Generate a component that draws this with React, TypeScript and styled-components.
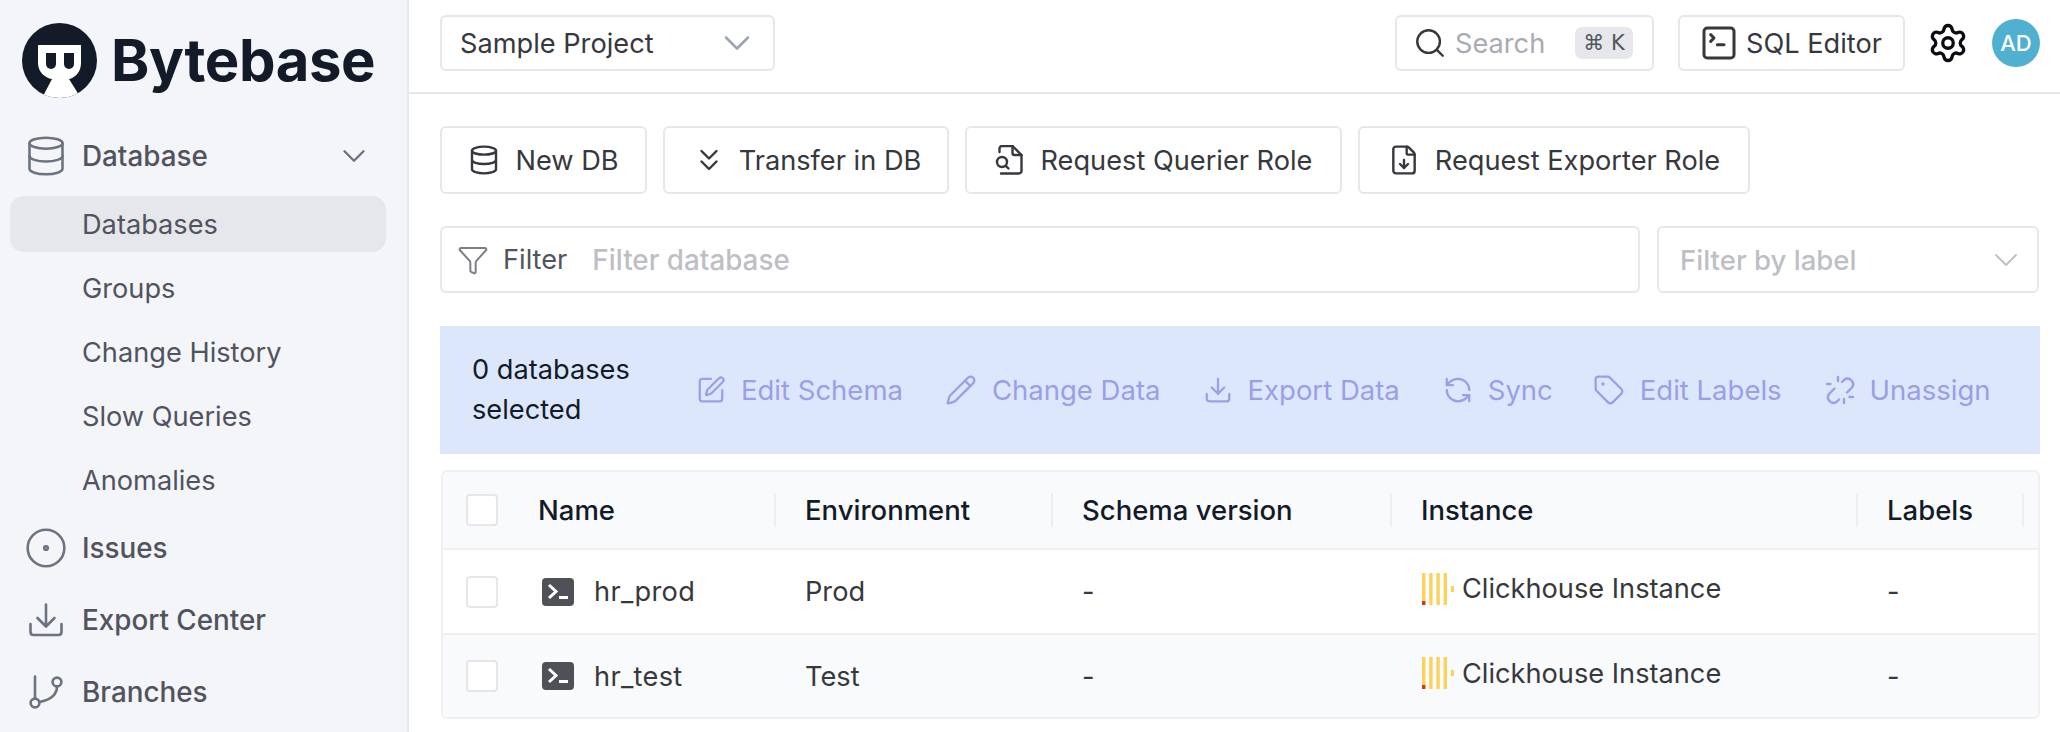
import React from "react";
import styled, { createGlobalStyle } from "styled-components";
import {
  ChevronDown,
  ChevronsDown,
  Search as SearchIcon,
  SquareTerminal,
  Settings,
  FileDown,
  Filter,
  SquarePen,
  Pencil,
  Download,
  RefreshCcw,
  Tag,
  CircleDot,
  Database as DbIcon,
} from "lucide-react";

const Global = createGlobalStyle`
  html, body { margin: 0; padding: 0; background: #fff; }
  body { font-family: Inter, "Liberation Sans", sans-serif; width: 2060px; height: 732px; overflow: hidden; }
  * { box-sizing: border-box; }
`;

const Page = styled.div`
  display: flex;
  width: 2060px;
  height: 732px;
  overflow: hidden;
`;

const Sidebar = styled.aside`
  width: 409px;
  flex: none;
  background: #f3f5f9;
  border-right: 2px solid #e5e7eb;
  display: flex;
  flex-direction: column;
`;

const LogoRow = styled.div`
  display: flex;
  align-items: center;
  gap: 14px;
  height: 120px;
  padding-left: 22px;
`;

const Wordmark = styled.span`
  font-family: Inter, sans-serif;
  font-weight: 700;
  font-size: 58px;
  letter-spacing: -0.4px;
  line-height: 1;
  color: #131a28;
`;

const NavTop = styled.div`
  display: flex;
  align-items: center;
  flex: none;
  height: 72px;
  padding: 0 34px 0 28px;
  gap: 18px;
  color: #51535e;
  font-size: 27.8px;
  font-weight: 500;
  svg { flex: none; color: #6b7280; }
`;

const NavIcon = styled.span`
  width: 36px;
  height: 36px;
  flex: none;
  display: flex;
  align-items: center;
  justify-content: center;
`;

const NavTopLabel = styled.span`
  flex: 1;
`;

const SubList = styled.div`
  flex: none;
  margin: 4px 0 -4px;
`;

const SubItem = styled.div<{ $active?: boolean }>`
  display: flex;
  align-items: center;
  height: 56px;
  margin: 0 21px 8px 10px;
  padding-left: 72px;
  border-radius: 14px;
  font-size: 27.2px;
  color: #51535e;
  background: ${(p) => (p.$active ? "#e5e7eb" : "transparent")};
`;

const Main = styled.main`
  flex: 1;
  min-width: 0;
  display: flex;
  flex-direction: column;
`;

const TopBar = styled.header`
  height: 94px;
  flex: none;
  border-bottom: 2px solid #e5e7eb;
  display: flex;
  align-items: center;
  padding: 0 20px 6px 31px;
`;

const Outline = styled.div`
  display: flex;
  align-items: center;
  border: 2px solid #e5e7eb;
  border-radius: 6px;
  background: #fff;
  font-size: 27.2px;
  color: #36383d;
`;

const ProjectSelect = styled(Outline)`
  width: 335px;
  height: 56px;
  padding: 0 14px 0 18px;
  justify-content: space-between;
  svg { color: #9ca3af; }
`;

const Spacer = styled.div`
  flex: 1;
`;

const SearchBox = styled(Outline)`
  width: 259px;
  height: 56px;
  padding: 0 19px 0 16px;
  gap: 8px;
  color: #a8abb1;
  svg { color: #36383d; flex: none; }
`;

const Kbd = styled.span`
  margin-left: auto;
  height: 32px;
  width: 58px;
  border-radius: 7px;
  background: #e5e7eb;
  color: #52555b;
  display: flex;
  align-items: center;
  justify-content: center;
  gap: 8px;
  font-size: 21px;
  font-family: "DejaVu Sans", Inter, sans-serif;
`;

const SqlButton = styled(Outline)`
  width: 227px;
  height: 56px;
  margin-left: 24px;
  padding-left: 19px;
  gap: 7px;
  svg { flex: none; }
`;

const GearWrap = styled.div`
  margin-left: 22px;
  display: flex;
  color: #0b0d12;
`;

const Avatar = styled.div`
  margin-left: 23px;
  width: 48px;
  height: 48px;
  border-radius: 50%;
  background: #4fb0cf;
  color: #fff;
  font-size: 22px;
  font-weight: 500;
  display: flex;
  align-items: center;
  justify-content: center;
`;

const Content = styled.section`
  padding: 32px 20px 0 31px;
  display: flex;
  flex-direction: column;
`;

const ActionRow = styled.div`
  display: flex;
  gap: 16px;
`;

const ActionButton = styled(Outline)<{ $w: number; $gap: number }>`
  width: ${(p) => p.$w}px;
  height: 68px;
  justify-content: center;
  gap: ${(p) => p.$gap}px;
  color: #36383d;
  svg { flex: none; }
`;

const FilterRow = styled.div`
  display: flex;
  gap: 17px;
  margin-top: 32px;
`;

const FilterInput = styled(Outline)`
  width: 1200px;
  height: 67px;
  padding-left: 15px;
  color: #52555b;
  svg { color: #7c7f87; }
`;

const FilterLabel = styled.span`
  margin-left: 14px;
`;

const Placeholder = styled.span`
  margin-left: 25px;
  color: #bdbfc4;
  font-size: 27.8px;
  font-weight: 500;
`;

const LabelSelect = styled(Outline)`
  width: 382px;
  height: 67px;
  padding: 0 11px 0 21px;
  justify-content: space-between;
  color: #bdbfc4;
  font-size: 27.6px;
  font-weight: 500;
  svg { color: #bdbfc4; }
`;

const Banner = styled.div`
  margin-top: 33px;
  height: 128px;
  background: #dde7fb;
  display: flex;
  align-items: center;
  padding-left: 32px;
`;

const BannerCount = styled.div`
  width: 224px;
  flex: none;
  font-size: 27.2px;
  line-height: 40px;
  color: #131a28;
`;

const BannerAction = styled.div<{ $ml: number }>`
  display: flex;
  align-items: center;
  gap: 15px;
  margin-left: ${(p) => p.$ml}px;
  font-size: 27.5px;
  color: #9a9fe6;
  white-space: nowrap;
  svg { flex: none; }
`;

const Table = styled.div`
  margin-top: 16px;
  border: 2px solid #eff0f3;
  border-radius: 6px;
  margin-left: 1px;
  width: 1599px;
  overflow: hidden;
`;

const Row = styled.div<{ $bg: string; $h: number; $line?: boolean }>`
  display: grid;
  grid-template-columns: 66px 267px 277px 339px 466px 166px 1fr;
  height: ${(p) => p.$h}px;
  background: ${(p) => p.$bg};
  align-items: center;
  border-bottom: ${(p) => (p.$line ? "2px solid #eff0f3" : "none")};
`;

const CheckCell = styled.div`
  padding-left: 23px;
  display: flex;
`;

const Checkbox = styled.span`
  width: 32px;
  height: 32px;
  background: #fff;
  border: 2px solid #e5e7eb;
  border-radius: 4px;
`;

const HeadCell = styled.div`
  position: relative;
  padding-left: 29px;
  font-size: 27.5px;
  font-weight: 500;
  color: #131a28;
  white-space: nowrap;
  &::after {
    content: "";
    position: absolute;
    right: 0;
    top: 0;
    bottom: 0;
    width: 2px;
    background: #eceef1;
  }
`;

const Cell = styled.div`
  padding-left: 29px;
  font-size: 27.2px;
  color: #36383d;
  display: flex;
  align-items: center;
  white-space: nowrap;
`;

const NameCell = styled(Cell)`
  padding-left: 33px;
  gap: 20px;
  letter-spacing: 0.3px;
`;

const InstanceCell = styled(Cell)`
  padding-left: 30px;
  gap: 8px;
  margin-top: -6px;
`;

const LogoMark = () => (
  <svg width="75" height="75" viewBox="0 0 75 75">
    <defs>
      <clipPath id="logoClip">
        <circle cx="37.5" cy="37.5" r="37.5" />
      </clipPath>
    </defs>
    <circle cx="37.5" cy="37.5" r="37.5" fill="#131a28" />
    <g clipPath="url(#logoClip)">
      <path
        d="M16 22H59V40C59 49 53 55 47 56L57 72V75H20L30 56C23 55 16 49 16 40Z"
        fill="#fff"
      />
    </g>
    <path d="M42 30H52V41A5 5 0 0 1 42 41Z" fill="#131a28" />
    <path d="M24 30H34V41A5 5 0 0 1 24 41Z" fill="#131a28" />
  </svg>
);

const BranchIcon = () => (
  <svg width="34" height="34" viewBox="0 0 34 34" fill="none" stroke="currentColor" strokeWidth="2.6" strokeLinecap="round">
    <circle cx="6" cy="28" r="4.4" />
    <circle cx="28" cy="7" r="4.4" />
    <path d="M6 23.6V1.5" />
    <path d="M28 11.4C28 20 20 25 10.4 27" />
  </svg>
);

const DownloadTray = () => (
  <svg width="34" height="34" viewBox="0 0 34 34" fill="none" stroke="currentColor" strokeWidth="2.6" strokeLinecap="round" strokeLinejoin="round">
    <path d="M1.5 21V29C1.5 31 2.5 32 4.5 32H29.5C31.5 32 32.5 31 32.5 29V21" />
    <path d="M17 1.5V23M8.5 15L17 23.5L25.5 15" />
  </svg>
);

const QuerierIcon = () => (
  <svg width="28" height="30" viewBox="0 0 28 30" fill="none" stroke="currentColor" strokeWidth="2.4" strokeLinecap="round" strokeLinejoin="round">
    <path d="M4.5 7V3.5A2.5 2.5 0 0 1 7 1H17.5L26.5 10V26A2.5 2.5 0 0 1 24 28.5H6" />
    <path d="M17.5 1V8A2 2 0 0 0 19.5 10H26.5" />
    <circle cx="7" cy="17" r="5" />
    <path d="M10.8 20.8L13.5 23.5" />
  </svg>
);

const UnassignIcon = () => (
  <svg width="30" height="30" viewBox="0 0 30 30" fill="none" stroke="currentColor" strokeWidth="2.4" strokeLinecap="round" strokeLinejoin="round">
    <path d="M17 7L19.5 4.5A5.6 5.6 0 0 1 27 12.5L22 17.5" />
    <path d="M9.5 13.5L4 19A5.6 5.6 0 0 0 11.5 27L14 24.5" />
    <path d="M13 2V6M19 24V28M2 9H5.5M24.5 22H28" />
  </svg>
);

const ClickhouseIcon = () => (
  <svg width="32" height="32" viewBox="0 0 32 32">
    <rect x="0" y="0" width="3.4" height="32" fill="#fbd35c" />
    <rect x="7.2" y="0" width="3.4" height="32" fill="#fbd35c" />
    <rect x="14.4" y="0" width="3.4" height="32" fill="#fbd35c" />
    <rect x="21.6" y="0" width="3.4" height="32" fill="#fbd35c" />
    <rect x="28.8" y="13" width="3.2" height="6" fill="#fbd35c" />
    <rect x="0" y="28" width="3.4" height="4" fill="#d8352a" />
  </svg>
);

const TerminalBadge = () => (
  <svg width="32" height="28" viewBox="0 0 32 28">
    <rect width="32" height="28" rx="4" fill="#4f5158" />
    <path d="M7 7L14 13.5L7 20" fill="none" stroke="#fff" strokeWidth="3" />
    <rect x="17" y="18" width="9" height="3" fill="#fff" />
  </svg>
);

const subItems = ["Groups", "Change History", "Slow Queries", "Anomalies"];

const rows = [
  { name: "hr_prod", env: "Prod", bg: "#ffffff", h: 85, line: true },
  { name: "hr_test", env: "Test", bg: "#f9fafb", h: 82, line: false },
];

export default function App() {
  return (
    <Page>
      <Global />
      <Sidebar>
        <LogoRow>
          <LogoMark />
          <Wordmark>Bytebase</Wordmark>
        </LogoRow>
        <NavTop>
          <NavIcon>
            <DbIcon size={44} strokeWidth={1.4} />
          </NavIcon>
          <NavTopLabel>Database</NavTopLabel>
          <ChevronDown size={38} strokeWidth={1.5} />
        </NavTop>
        <SubList>
          <SubItem $active>Databases</SubItem>
          {subItems.map((s) => (
            <SubItem key={s}>{s}</SubItem>
          ))}
        </SubList>
        <NavTop>
          <NavIcon>
            <CircleDot size={44} strokeWidth={1.4} />
          </NavIcon>
          <NavTopLabel>Issues</NavTopLabel>
        </NavTop>
        <NavTop>
          <NavIcon>
            <DownloadTray />
          </NavIcon>
          <NavTopLabel>Export Center</NavTopLabel>
        </NavTop>
        <NavTop>
          <NavIcon>
            <BranchIcon />
          </NavIcon>
          <NavTopLabel>Branches</NavTopLabel>
        </NavTop>
      </Sidebar>
      <Main>
        <TopBar>
          <ProjectSelect>
            Sample Project
            <ChevronDown size={44} strokeWidth={1.35} />
          </ProjectSelect>
          <Spacer />
          <SearchBox>
            <SearchIcon size={34} strokeWidth={1.7} />
            Search
            <Kbd>⌘ K</Kbd>
          </SearchBox>
          <SqlButton>
            <SquareTerminal size={40} strokeWidth={1.8} />
            SQL Editor
          </SqlButton>
          <GearWrap>
            <Settings size={42} strokeWidth={1.9} />
          </GearWrap>
          <Avatar>AD</Avatar>
        </TopBar>
        <Content>
          <ActionRow>
            <ActionButton $w={207} $gap={15}>
              <DbIcon size={32} strokeWidth={1.8} />
              New DB
            </ActionButton>
            <ActionButton $w={286} $gap={12}>
              <ChevronsDown size={36} strokeWidth={1.6} />
              Transfer in DB
            </ActionButton>
            <ActionButton $w={377} $gap={18}>
              <QuerierIcon />
              Request Querier Role
            </ActionButton>
            <ActionButton $w={392} $gap={15}>
              <FileDown size={32} strokeWidth={1.8} />
              Request Exporter Role
            </ActionButton>
          </ActionRow>
          <FilterRow>
            <FilterInput>
              <Filter size={32} strokeWidth={1.5} />
              <FilterLabel>Filter</FilterLabel>
              <Placeholder>Filter database</Placeholder>
            </FilterInput>
            <LabelSelect>
              Filter by label
              <ChevronDown size={40} strokeWidth={1.1} />
            </LabelSelect>
          </FilterRow>
          <Banner>
            <BannerCount>0 databases selected</BannerCount>
            <BannerAction $ml={0}>
              <SquarePen size={30} strokeWidth={1.8} />
              Edit Schema
            </BannerAction>
            <BannerAction $ml={42}>
              <Pencil size={32} strokeWidth={1.7} />
              Change Data
            </BannerAction>
            <BannerAction $ml={42}>
              <Download size={30} strokeWidth={1.8} />
              Export Data
            </BannerAction>
            <BannerAction $ml={43}>
              <RefreshCcw size={30} strokeWidth={1.8} />
              Sync
            </BannerAction>
            <BannerAction $ml={40}>
              <Tag size={32} strokeWidth={1.7} />
              Edit Labels
            </BannerAction>
            <BannerAction $ml={43}>
              <UnassignIcon />
              Unassign
            </BannerAction>
          </Banner>
          <Table>
            <Row $bg="#f9fafb" $h={78} $line>
              <CheckCell>
                <Checkbox />
              </CheckCell>
              <HeadCell>Name</HeadCell>
              <HeadCell>Environment</HeadCell>
              <HeadCell>Schema version</HeadCell>
              <HeadCell>Instance</HeadCell>
              <HeadCell>Labels</HeadCell>
            </Row>
            {rows.map((r) => (
              <Row key={r.name} $bg={r.bg} $h={r.h} $line={r.line}>
                <CheckCell>
                  <Checkbox />
                </CheckCell>
                <NameCell>
                  <TerminalBadge />
                  {r.name}
                </NameCell>
                <Cell>{r.env}</Cell>
                <Cell>-</Cell>
                <InstanceCell>
                  <ClickhouseIcon />
                  Clickhouse Instance
                </InstanceCell>
                <Cell>-</Cell>
              </Row>
            ))}
          </Table>
        </Content>
      </Main>
    </Page>
  );
}
